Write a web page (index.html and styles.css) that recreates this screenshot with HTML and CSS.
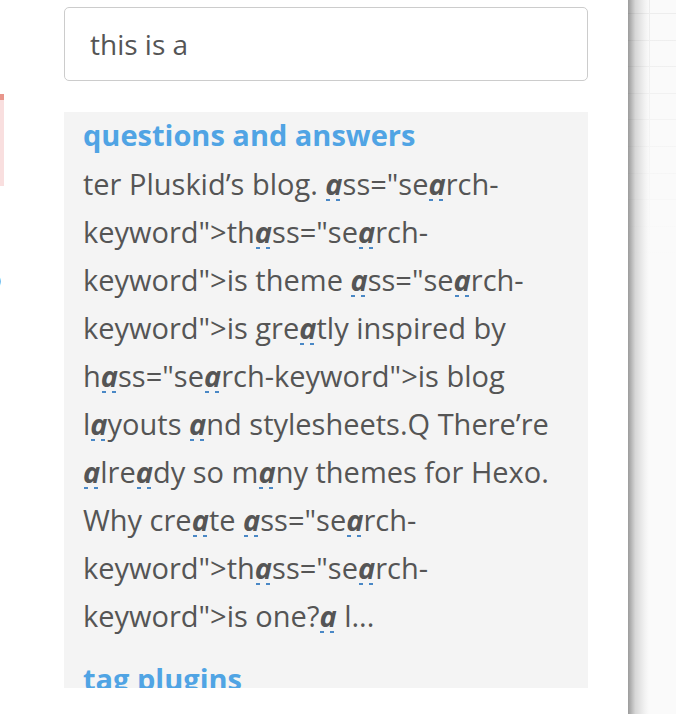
FILE: index.html
```html
<!DOCTYPE html>
<html lang="en">
<head>
<meta charset="utf-8">
<title>Search</title>
<link rel="stylesheet" href="styles.css">
</head>
<body>
<div class="stage">
  <aside class="panel">
    <div class="gutter">
      <div class="mark"></div>
      <div class="glyph">o</div>
    </div>
    <div class="main">
      <input class="search" type="text" value="this is a">
      <div class="results">
        <div class="result">
          <div class="title">questions and answers</div>
          <p class="excerpt">ter Pluskid’s blog. <b class="hl">a</b>ss="se<b class="hl">a</b>rch-keyword"&gt;th<b class="hl">a</b>ss="se<b class="hl">a</b>rch-keyword"&gt;is theme <b class="hl">a</b>ss="se<b class="hl">a</b>rch-keyword"&gt;is gre<b class="hl">a</b>tly inspired by h<b class="hl">a</b>ss="se<b class="hl">a</b>rch-keyword"&gt;is blog l<b class="hl">a</b>youts <b class="hl">a</b>nd stylesheets.Q There’re <b class="hl">a</b>lre<b class="hl">a</b>dy so m<b class="hl">a</b>ny themes for Hexo. Why cre<b class="hl">a</b>te <b class="hl">a</b>ss="se<b class="hl">a</b>rch-keyword"&gt;th<b class="hl">a</b>ss="se<b class="hl">a</b>rch-keyword"&gt;is one?<b class="hl">a</b> l...</p>
        </div>
        <div class="result">
          <div class="title">tag plugins</div>
          <p class="excerpt">This is a tag plugin excerpt.</p>
        </div>
      </div>
    </div>
  </aside>
  <div class="shade"></div>
  <div class="backdrop"></div>
</div>
</body>
</html>
```
FILE: styles.css
```css
html, body {
  margin: 0;
  padding: 0;
}
body {
  width: 676px;
  height: 714px;
  overflow: hidden;
  font-family: "Open Sans", "Liberation Sans", sans-serif;
  background: #fafafa;
}
.stage {
  display: flex;
  height: 714px;
  background:
    linear-gradient(to bottom, rgba(250,250,250,0) 0, rgba(250,250,250,0.6) 150px, rgba(250,250,250,1) 260px),
    linear-gradient(to right, transparent 649px, #ececec 649px, #ececec 650px, transparent 650px),
    repeating-linear-gradient(to bottom, transparent 0, transparent 13px, #ececec 13px, #ececec 14px, transparent 14px, transparent 26.6px),
    #fafafa;
}
.panel {
  flex: 0 0 628px;
  display: flex;
  background: #fff;
  height: 714px;
}
.gutter {
  flex: 0 0 64px;
  overflow: hidden;
  display: flex;
  flex-direction: column;
}
.mark {
  margin-top: 94px;
  width: 4px;
  height: 92px;
  background: #f9dfdf;
  border-top: 6px solid #e8968b;
  box-sizing: border-box;
}
.glyph {
  margin-top: 78px;
  margin-left: -15px;
  font-size: 28px;
  line-height: 28px;
  color: #444;
}
.main {
  flex: 0 0 524px;
  padding-top: 7px;
  display: flex;
  flex-direction: column;
}
.search {
  display: block;
  width: 524px;
  height: 74px;
  box-sizing: border-box;
  border: 1px solid #cccccc;
  border-radius: 5px;
  padding: 0 25px;
  margin: 0;
  font-family: "Open Sans", "Liberation Sans", sans-serif;
  font-size: 28px;
  color: #555;
  background: #fff;
  outline: none;
}
.results {
  margin-top: 31px;
  height: 576px;
  overflow: hidden;
  background: #f4f4f4;
  padding: 0 19px;
  box-sizing: border-box;
}
.result + .result {
  margin-top: 16px;
}
.title {
  font-weight: 700;
  font-size: 29px;
  line-height: 46px;
  color: #50a4e4;
}
.excerpt {
  margin: 2px 0 0;
  font-size: 29px;
  line-height: 48px;
  color: #555;
}
.hl {
  font-weight: 700;
  font-style: italic;
  color: #555;
  background-image: repeating-linear-gradient(to right, #4a88c6 0, #4a88c6 4px, transparent 4px, transparent 10px);
  background-repeat: no-repeat;
  background-size: calc(100% - 1px) 2px;
  background-position: 1px calc(100% - 2px);
}
.shade {
  flex: 0 0 21px;
  background: linear-gradient(to right, rgba(0,0,0,0.38), rgba(0,0,0,0.14) 35%, rgba(0,0,0,0.03) 80%, rgba(0,0,0,0));
}
.backdrop {
  flex: 1;
}
```
